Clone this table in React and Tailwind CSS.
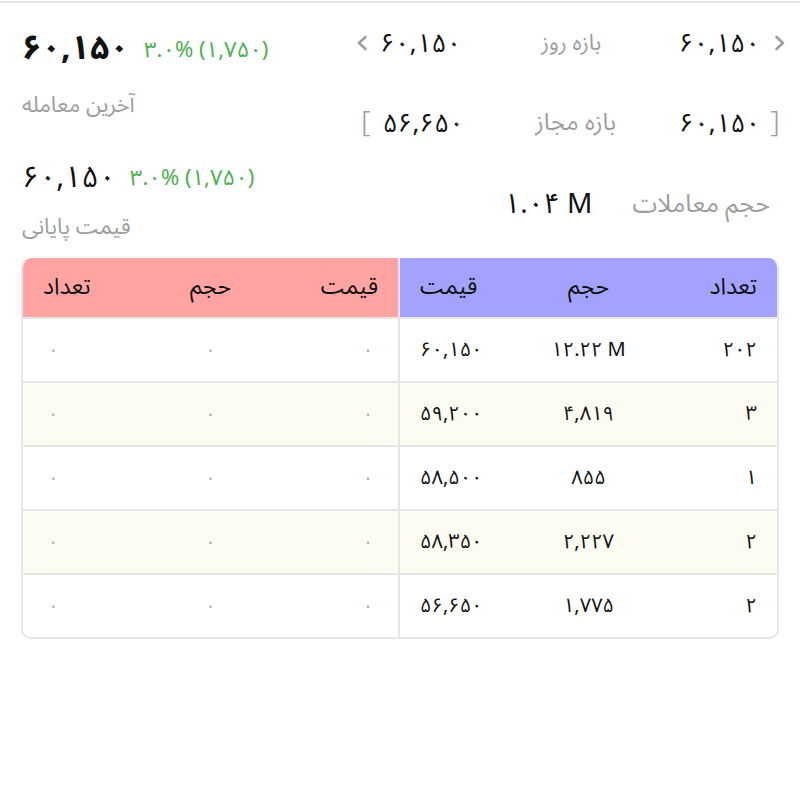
import React from "react";

const F = { fontFamily: '"Noto Sans Arabic", "Noto Naskh Arabic", "DejaVu Sans", "Noto Sans", sans-serif' };

const buyRows = [
  ["۶۰,۱۵۰", "۱۲.۲۲ M", "۲۰۲"],
  ["۵۹,۲۰۰", "۴,۸۱۹", "۳"],
  ["۵۸,۵۰۰", "۸۵۵", "۱"],
  ["۵۸,۳۵۰", "۲,۲۲۷", "۲"],
  ["۵۶,۶۵۰", "۱,۷۷۵", "۲"],
];

function Chevron({ dir }) {
  return (
    <svg width="12" height="16" viewBox="0 0 12 16" className="shrink-0">
      <path
        d={dir === "left" ? "M9.5 2 L3 8 L9.5 14" : "M2.5 2 L9 8 L2.5 14"}
        fill="none"
        stroke="#9e9e9e"
        strokeWidth="2.6"
        strokeLinecap="round"
        strokeLinejoin="round"
      />
    </svg>
  );
}

function Row({ i, right }) {
  const bg = i % 2 === 1 ? "bg-[#fcfcf2]" : "bg-white";
  const h = i === 4 ? "h-[62px]" : "h-[64px] border-b-2 border-[#e6e6e6]";
  return (
    <div className={`flex ${h} ${bg}`}>
      <div className="grid w-[377px] grid-cols-3 items-center px-[22px] text-[18px] text-[#a8a8a8] border-r-2 border-[#e6e6e6]">
        <span className="text-left pl-[3px]">۰</span>
        <span className="text-center">۰</span>
        <span className="text-right pr-[3px]">۰</span>
      </div>
      <div className="grid flex-1 grid-cols-3 items-center px-[20px] text-[20px] text-[#111]">
        <span className="text-left" dir="ltr">{right[0]}</span>
        <span className="text-center" dir="ltr">{right[1]}</span>
        <span className="text-right" dir="ltr">{right[2]}</span>
      </div>
    </div>
  );
}

export default function App() {
  return (
    <div className="w-[800px] h-[790px] bg-white overflow-hidden" style={F}>
      <div className="h-[2px] mt-[1px] bg-[#e4e4e4]" />
      <div className="flex h-[255px]">
        {/* left column */}
        <div className="w-[335px] pl-[22px] pt-[20px] flex flex-col">
          <div className="flex h-[50px] items-center gap-[15px]">
            <span className="text-[34px] font-bold text-[#111]" dir="ltr">۶۰,۱۵۰</span>
            <span className="text-[22px] text-[#4caf50] mt-[4px]" dir="ltr">۳.۰% (۱,۷۵۰)</span>
          </div>
          <div className="h-[40px] mt-[12px] flex items-center text-[22px] text-[#9e9e9e]">
            <span dir="rtl">آخرین معامله</span>
          </div>
          <div className="flex h-[40px] mt-[32px] items-center gap-[14px]">
            <span className="text-[30px] text-[#111]" dir="ltr">۶۰,۱۵۰</span>
            <span className="text-[22px] text-[#4caf50] mt-[2px]" dir="ltr">۳.۰% (۱,۷۵۰)</span>
          </div>
          <div className="h-[36px] mt-[12px] flex items-center text-[22px] text-[#9e9e9e]">
            <span dir="rtl">قیمت پایانی</span>
          </div>
        </div>
        {/* right column */}
        <div className="flex-1 pt-[20px] flex flex-col">
          <div className="flex h-[40px] items-center pl-[21px] pr-[14px]">
            <div className="flex w-[110px] shrink-0 items-center gap-[12px]">
              <Chevron dir="left" />
              <span className="text-[26px] text-[#111] whitespace-nowrap" dir="ltr">۶۰,۱۵۰</span>
            </div>
            <div className="flex-1 text-center text-[22px] text-[#9e9e9e]" dir="rtl">بازه روز</div>
            <div className="flex w-[110px] shrink-0 items-center justify-end gap-[14px]">
              <span className="text-[26px] text-[#111] whitespace-nowrap" dir="ltr">۶۰,۱۵۰</span>
              <Chevron dir="right" />
            </div>
          </div>
          <div className="flex h-[40px] mt-[40px] items-center pl-[26px] pr-[20px]">
            <div className="flex w-[110px] shrink-0 items-center gap-[12px]">
              <span className="text-[30px] font-light text-[#9e9e9e] leading-none">[</span>
              <span className="text-[26px] text-[#111] whitespace-nowrap" dir="ltr">۵۶,۶۵۰</span>
            </div>
            <div className="flex-1 text-center text-[24px] text-[#9e9e9e]" dir="rtl">بازه مجاز</div>
            <div className="flex w-[100px] shrink-0 items-center justify-end gap-[10px]">
              <span className="text-[26px] text-[#111] whitespace-nowrap" dir="ltr">۶۰,۱۵۰</span>
              <span className="text-[30px] font-light text-[#9e9e9e] leading-none">]</span>
            </div>
          </div>
          <div className="flex h-[40px] mt-[42px] items-center justify-end gap-[40px] pr-[30px]">
            <span className="text-[28px] text-[#111]" dir="ltr">۱.۰۴ M</span>
            <span className="text-[25px] text-[#9e9e9e]" dir="rtl">حجم معاملات</span>
          </div>
        </div>
      </div>

      {/* table */}
      <div className="mx-[21px] w-[758px] overflow-hidden rounded-[10px] border-2 border-t-0 border-[#e6e6e6]">
        <div className="flex h-[61px] border-b-2 border-[#e6e6e6] text-[23px] text-[#111]" dir="ltr">
          <div className="grid w-[377px] grid-cols-3 items-center bg-[#ffa3a3] px-[20px] border-r-2 border-[#e6e6e6]">
            <span className="text-left">تعداد</span>
            <span className="text-center">حجم</span>
            <span className="text-right">قیمت</span>
          </div>
          <div className="grid flex-1 grid-cols-3 items-center bg-[#a3a3ff] px-[20px]">
            <span className="text-left">قیمت</span>
            <span className="text-center">حجم</span>
            <span className="text-right">تعداد</span>
          </div>
        </div>
        {buyRows.map((r, i) => (
          <Row key={i} i={i} right={r} />
        ))}
      </div>
    </div>
  );
}
